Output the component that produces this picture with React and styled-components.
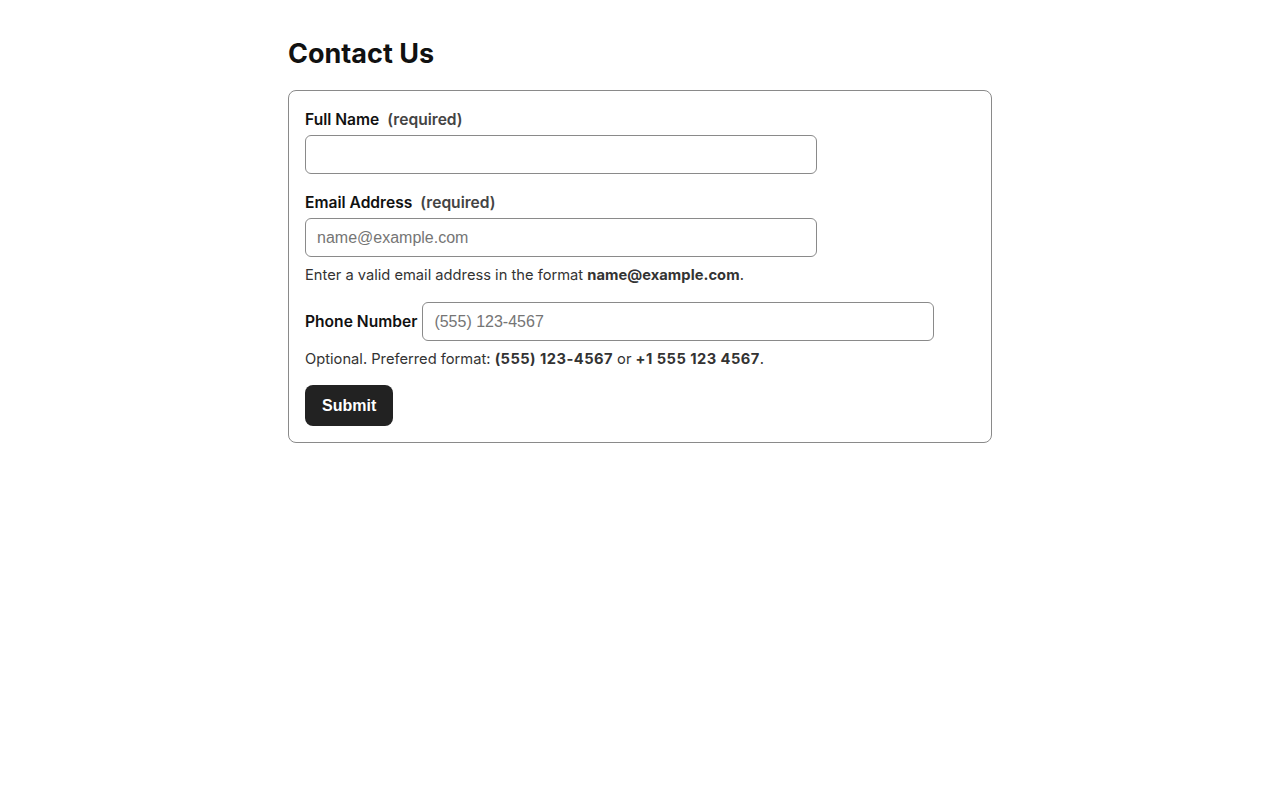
import React from 'react';
import styled, { createGlobalStyle } from 'styled-components';

const GlobalStyle = createGlobalStyle`
  body {
    margin: 0;
    background: #fff;
    font-family: Inter, "Noto Sans", sans-serif;
    color: #111;
  }
`;

const Page = styled.main`
  width: 704px;
  margin: 0 auto;
  padding-top: 38px;
`;

const Title = styled.h1`
  margin: 0 0 20px;
  font-size: 27px;
  line-height: 32px;
  font-weight: 700;
  color: #111;
`;

const Form = styled.form`
  border: 1px solid #8a8a8a;
  border-radius: 8px;
  padding: 16px;
  display: flex;
  flex-direction: column;
  align-items: flex-start;
`;

const Field = styled.div`
  display: flex;
  flex-direction: column;
  align-items: flex-start;
  margin-bottom: ${p => (p.$last ? 0 : 16)}px;
`;

const InlineField = styled.div`
  display: flex;
  align-items: center;
  gap: 5px;
`;

const Label = styled.label`
  font-size: 15.6px;
  line-height: 24px;
  font-weight: 600;
  color: #111;
  padding-top: ${p => (p.$inline ? '0' : '1px')};
  margin-bottom: ${p => (p.$inline ? '0' : '3px')};
`;

const Required = styled.span`
  color: #444;
  margin-left: 8px;
`;

const Input = styled.input`
  box-sizing: border-box;
  width: 512px;
  height: 39px;
  padding: 1px 11px 0;
  border: 1px solid #8a8a8a;
  border-radius: 6px;
  font-family: "Liberation Sans", Arial, sans-serif;
  font-size: 16px;
  color: #111;
  background: #fff;

  &::placeholder {
    color: #757575;
  }
`;

const Help = styled.p`
  margin: 7px 0 ${p => p.$gap || 0}px;
  font-size: 14.7px;
  line-height: 22px;
  color: #333;

  strong {
    font-weight: 700;
    color: #333;
    letter-spacing: ${p => p.$spread || 0.3}px;
  }
`;

const SubmitButton = styled.button`
  height: 41px;
  padding: 1px 17px 0;
  border: none;
  border-radius: 8px;
  background: #222;
  color: #fff;
  font-family: "Liberation Sans", Arial, sans-serif;
  font-size: 16px;
  font-weight: 700;
  cursor: pointer;
`;

export default function App() {
  return (
    <>
      <GlobalStyle />
      <Page>
        <Title>Contact Us</Title>
        <Form onSubmit={e => e.preventDefault()}>
          <Field>
            <Label htmlFor="name">
              Full Name<Required>(required)</Required>
            </Label>
            <Input id="name" type="text" />
          </Field>

          <Field $last>
            <Label htmlFor="email">
              Email Address<Required>(required)</Required>
            </Label>
            <Input id="email" type="email" placeholder="name@example.com" />
          </Field>
          <Help $gap={16} $spread={0.05}>
            Enter a valid email address in the format <strong>name@example.com</strong>.
          </Help>

          <InlineField>
            <Label htmlFor="phone" $inline>Phone Number</Label>
            <Input id="phone" type="tel" placeholder="(555) 123-4567" />
          </InlineField>
          <Help $gap={15} $spread={0.45}>
            Optional. Preferred format: <strong>(555) 123-4567</strong> or <strong>+1 555 123 4567</strong>.
          </Help>

          <SubmitButton type="submit">Submit</SubmitButton>
        </Form>
      </Page>
    </>
  );
}
